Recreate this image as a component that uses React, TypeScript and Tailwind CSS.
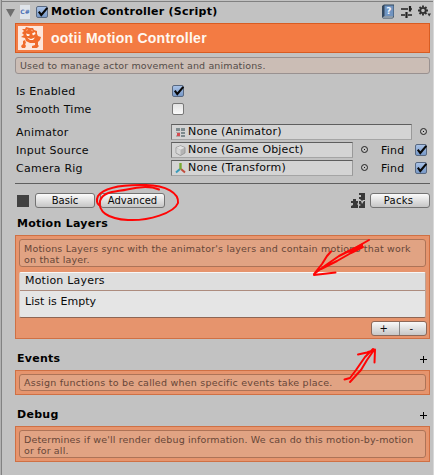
import type { ReactNode } from 'react';

function Check({ on = true }: { on?: boolean }) {
  return (
    <span
      className={`relative block h-3 w-3 shrink-0 rounded-[2px] border ${
        on
          ? 'border-[#586880] bg-linear-to-b from-[#a9c2e6] to-[#7899c8]'
          : 'border-[#777] bg-linear-to-b from-[#e2e2e2] to-[#fafafa]'
      }`}
    >
      {on && (
        <svg className="absolute -top-px left-0" width="12" height="12" viewBox="0 0 12 12">
          <path d="M1.8 5.6 L4.3 9 L10.3 1.8" fill="none" stroke="#080808" strokeWidth="2.1" />
        </svg>
      )}
    </span>
  );
}

function Button({ children, className }: { children: ReactNode; className: string }) {
  return (
    <button
      className={`h-[15px] shrink-0 rounded-[3px] border border-[#737373] bg-linear-to-b from-[#fbfbfb] to-[#c6c6c6] text-center text-[10px] leading-[13px] ${className}`}
    >
      {children}
    </button>
  );
}

function Target() {
  return (
    <svg className="mb-[2px] block shrink-0" width="9" height="9" viewBox="0 0 9 9">
      <circle cx="4.5" cy="4.5" r="3" fill="none" stroke="#222" />
      <rect x="4" y="4" width="1" height="1" fill="#111" />
    </svg>
  );
}

function Note({ children, className }: { children: ReactNode; className: string }) {
  return (
    <div className={`rounded-[3px] border pl-1 text-[9.5px] leading-[11px] whitespace-nowrap ${className}`}>
      {children}
    </div>
  );
}

function Label({ children, className }: { children: ReactNode; className: string }) {
  return <span className={`shrink-0 pt-[2px] tracking-[0.25px] ${className}`}>{children}</span>;
}

function Field({ icon, children, className }: { icon: ReactNode; children: ReactNode; className: string }) {
  return (
    <div
      className={`flex h-4 shrink-0 items-center border border-t-[#5e5e5e] border-r-[#999] border-b-[#a5a5a5] border-l-[#777] bg-[#d4d4d4] pl-[3px] whitespace-nowrap ${className}`}
    >
      <span className="mr-[2px] h-[11px] w-[11px] shrink-0">{icon}</span>
      <span className="pt-px tracking-[0.15px]">{children}</span>
    </div>
  );
}

function AnimatorIcon() {
  return (
    <svg width="11" height="11" viewBox="0 0 11 11">
      <path d="M1 1h4v3H1zM6 1h4v3H6zM6 5h4v2H6zM6 8h4v2H6z" fill="#7d8a8d" />
      <path d="M1 5h4v1H1zM1 8h4v2H1z" fill="#b3aaaa" />
      <path d="M2 6h3v3H2z" fill="#d64b50" />
    </svg>
  );
}

function CubeIcon() {
  return (
    <svg width="11" height="11" viewBox="0 0 11 11">
      <path d="M5.5 .7L10 2.5V8L5.5 10.5L1 8V2.5Z" fill="#b4b4b4" stroke="#929292" strokeWidth=".8" />
      <path d="M1.4 2.7L5.5 1.1L9.6 2.7L5.5 4.8Z" fill="#e2e2e2" />
      <path d="M1.4 3L5.5 5V10L1.4 7.8Z" fill="#d6d6d6" />
    </svg>
  );
}

function AxisIcon() {
  return (
    <svg width="11" height="11" viewBox="0 0 11 11">
      <path d="M5 6L1 9.5" stroke="#389bbb" strokeWidth="2" />
      <path d="M6 6L10 9.5" stroke="#c14b3b" strokeWidth="2" />
      <path d="M5.5 0V6.5" stroke="#78a832" strokeWidth="2.4" />
    </svg>
  );
}

function Plus() {
  return (
    <svg className="mr-[3px]" width="7" height="7" viewBox="0 0 7 7">
      <path d="M3 0h1v3h3v1H4v3H3V4H0V3h3z" fill="#000" />
    </svg>
  );
}

function Mascot() {
  return (
    <svg className="ml-[2px] shrink-0" width="25" height="24" viewBox="0 0 25 24">
      <rect width="25" height="24" fill="#fde5da" />
      <path
        d="M4 3L7 3L8 1L12 2L15 2L16 4L19 5L19 8L20 10L23 11L22 14L20 16L20 19L21 20L19 22L14 22L14 20L17 19L17 17L12 17L8 15L7 12L3 11L6 9L4 7L6 5Z"
        fill="#f06a2b"
      />
      <path d="M5 15L7 14L8 17L7 18L8 20L7 22L4 22L3 20L5 18Z" fill="#f06a2b" />
      <path
        d="M8 7.500L12 8.500L11 10L9 10ZM14 7.500L17 6L17.500 8L15 9.500ZM9 11.500L13 13L17 11.500L15 14L12 14Z"
        fill="#fff3ec"
      />
      <path d="M8 4.500L10 3.500M13 4L15 5" stroke="#f9a67c" />
    </svg>
  );
}

function HeaderIcons() {
  return (
    <div className="-mr-[2px] ml-auto flex items-center pb-[2px]">
      <svg width="14" height="15" viewBox="0 0 14 15">
        <path d="M1 2L3 .5H13V13L11.5 14.5H2L1 13Z" fill="#33485f" />
        <path d="M3.5 1.5H12.5V12H3.5Z" fill="#7194c0" />
        <path d="M2 13L3.5 12.5H12.5L11.5 13.5H2Z" fill="#e7edf3" />
        <text x="5.3" y="10.2" fontSize="9" fontWeight="bold" fill="#edf4ff">?</text>
      </svg>
      <svg className="ml-[6px]" width="12" height="12" viewBox="0 0 12 12">
        <path d="M0 3H7M9.5 3H11M0 9H4M7 9H11" stroke="#222" strokeWidth="1.6" />
        <path d="M9 0V5.5M5.5 6V12" stroke="#222" strokeWidth="2.2" />
      </svg>
      <svg className="ml-[5px]" width="14" height="13" viewBox="0 0 14 13">
        <circle cx="5" cy="5.5" r="2.7" fill="none" stroke="#303030" strokeWidth="1.8" />
        <path
          d="M5 .5V2M5 9V10.5M0 5.5H2M8 5.5H10M1.5 2L3 3.5M7 7.5L8.5 9M1.5 9L3 7.5M7 3.5L8.5 2"
          stroke="#303030"
          strokeWidth="1.9"
        />
        <path d="M9.5 8.5H13L11.2 11.5Z" fill="#303030" />
      </svg>
    </div>
  );
}

function Annotations() {
  return (
    <svg className="pointer-events-none absolute inset-0" width="434" height="475" viewBox="0 0 434 475">
      <g fill="none" stroke="#ff0505" strokeWidth="2" strokeLinecap="round" strokeLinejoin="round">
        <path d="M158 189.500C149 185.500 138 186.500 126 189.500C115 192 102 191 99 201C97 211 106 219 127 220C148 221 173 213 177 203C178 193 165 185.500 145 185C126 184.500 104 186 97 196C95 200 96 204 98 205" />
        <path d="M368 240L354 248L338 256L325 265L313 274M313 275L334.500 272.500M313 274L321 264L326 256L330 251.500M362 247L350 253L336 261L320 269" />
        <path d="M343.500 379.500L349 378L355 370L364 357L372 349M349 382L360 370L366 360L373 350M357 354.500L366 352.500L374 349.500L373.500 362.500" />
      </g>
      <path d="M344 252L362 243L362 247L350 253Z" fill="#ff0505" />
    </svg>
  );
}

const headingClass =
  'flex items-center justify-between pl-[2px] text-[11px] font-bold tracking-[0.27px] text-black';

export default function App() {
  return (
    <div className="relative h-[475px] w-[434px] overflow-hidden border-r border-l border-r-[#d8d8d8] border-l-[#b2b2b2] bg-[#c2c2c2] font-['DejaVu_Sans',sans-serif] text-[11px] text-[#090909]">
      <div className="h-full border-l border-l-[#828282] pr-[3px] pl-[13px]">
        <div className="-mr-[3px] -ml-[13px] h-[2px] border-b border-[#808080]" />
        <header className="-ml-[9px] flex h-[21px] items-center">
          <svg width="9" height="8" viewBox="0 0 9 8">
            <path d="M0 0H9L4.5 8Z" fill="#6e6e6e" />
          </svg>
          <span className="mb-[2px] ml-[5px] flex h-[14px] w-[10px] items-center justify-center bg-[#dfe4ea] text-[6px] font-bold text-[#496fb4]">
            C#
          </span>
          <span className="mb-[2px] ml-[6px]">
            <Check />
          </span>
          <span className="ml-[3px] text-[11px] font-bold tracking-[0.27px] whitespace-nowrap text-black">
            Motion Controller (Script)
          </span>
          <HeaderIcons />
        </header>

        <div className="flex h-[30px] items-center border border-[#d85c22] bg-[#f37b43]">
          <Mascot />
          <span className="ml-[8px] font-['Liberation_Sans',sans-serif] text-[14px] font-bold tracking-[0.25px] whitespace-nowrap text-[#fff7f0]">
            ootii Motion Controller
          </span>
        </div>

        <Note className="mt-1 h-[17px] border-[#999190] bg-[#cbbdb5] pt-[2px] tracking-[0.13px] text-[#544c49]">
          Used to manage actor movement and animations.
        </Note>

        <div className="mt-2 flex h-[18px] items-center pl-px">
          <Label className="w-[156px]">Is Enabled</Label>
          <Check />
        </div>
        <div className="flex h-[18px] items-center pl-px">
          <Label className="w-[156px]">Smooth Time</Label>
          <Check on={false} />
        </div>

        <div className="mt-[5px] flex h-[18px] items-center pl-px">
          <Label className="w-[155px]">Animator</Label>
          <Field className="w-[241px]" icon={<AnimatorIcon />}>None (Animator)</Field>
          <span className="ml-[7px]"><Target /></span>
        </div>
        <div className="flex h-[18px] items-center pl-px">
          <Label className="w-[155px]">Input Source</Label>
          <Field className="w-[182px]" icon={<CubeIcon />}>None (Game Object)</Field>
          <span className="ml-[7px]"><Target /></span>
          <Label className="ml-3 w-[34px]">Find</Label>
          <Check />
        </div>
        <div className="flex h-[18px] items-center pl-px">
          <Label className="w-[155px]">Camera Rig</Label>
          <Field className="w-[182px]" icon={<AxisIcon />}>None (Transform)</Field>
          <span className="ml-[7px]"><Target /></span>
          <Label className="ml-3 w-[34px]">Find</Label>
          <Check />
        </div>

        <div className="mt-[6px] h-px bg-[#5f5f5f]" />
        <div className="mt-[9px] flex h-[15px] items-center">
          <span className="ml-[2px] h-3 w-3 bg-[#414141]" />
          <Button className="ml-[6px] w-[60px]">Basic</Button>
          <Button className="ml-[5px] w-[65px]">Advanced</Button>
          <svg className="ml-auto" width="14" height="15" viewBox="0 0 14 15">
            <path d="M8 0H14V7L12 7L11 8L9 6H8V4H10V2H8ZM0 8H2V6H5V8H7V10L6 11L7 12V15H0V13L2 12V10H0ZM8 8L10 8L11 11L13 8H14V15H8V13L10 12L8 11Z" fill="#393939" />
          </svg>
          <Button className="ml-[5px] w-[60px] pr-[3px] tracking-[0.3px]">Packs</Button>
        </div>

        <h2 className={`${headingClass} h-[27px] pt-[5px]`}>Motion Layers</h2>
        <section className="h-[104px] border border-[#cf7044] bg-[#e6946d] px-[3px] pt-[3px]">
          <Note className="h-[28px] border-[#ad7357] bg-[#e1a383] pt-[3px] tracking-[0.19px] text-[#674638]">
            Motions Layers sync with the animator's layers and contain motions that work
            <br />
            on that layer.
          </Note>
          <div className="mt-[5px] h-[46px] rounded-[2px] border border-t-[#f7f7f7] border-r-[#bfa091] border-b-[#8e6654] border-l-[#d9c5bb] bg-[#e5e5e5]">
            <div className="flex h-[18px] items-center border-b border-[#ad8c7e] bg-[#dedede] pb-px pl-[5px] tracking-[0.2px]">
              Motion Layers
            </div>
            <div className="flex h-[22px] items-center pl-[5px] tracking-[0.05px]">List is Empty</div>
          </div>
          <div className="mt-[3px] -mr-px ml-auto flex h-[15px] w-[56px] rounded-[3px] border border-[#8e6857] bg-linear-to-b from-[#f9f9f9] to-[#c7c7c7] text-center text-[10px] leading-[13px]">
            <span className="flex-1 border-r border-[#888] pr-[3px]">+</span>
            <span className="flex-1 pr-[3px]">-</span>
          </div>
        </section>

        <h2 className={`${headingClass} h-[31px] pt-[9px]`}>
          Events <Plus />
        </h2>
        <section className="h-[25px] border border-[#cf7044] bg-[#e6946d] p-[3px]">
          <Note className="h-[17px] border-[#ad7357] bg-[#e1a383] pt-[2px] tracking-[0.23px] text-[#674638]">
            Assign functions to be called when specific events take place.
          </Note>
        </section>

        <h2 className={`${headingClass} h-[31px] pt-[9px]`}>
          Debug <Plus />
        </h2>
        <section className="h-9 border border-[#cf7044] bg-[#e6946d] p-[3px]">
          <Note className="h-7 border-[#ad7357] bg-[#e1a383] pt-[3px] tracking-[0.15px] text-[#674638]">
            Determines if we'll render debug information. We can do this motion-by-motion
            <br />
            or for all.
          </Note>
        </section>
      </div>
      <Annotations />
    </div>
  );
}
